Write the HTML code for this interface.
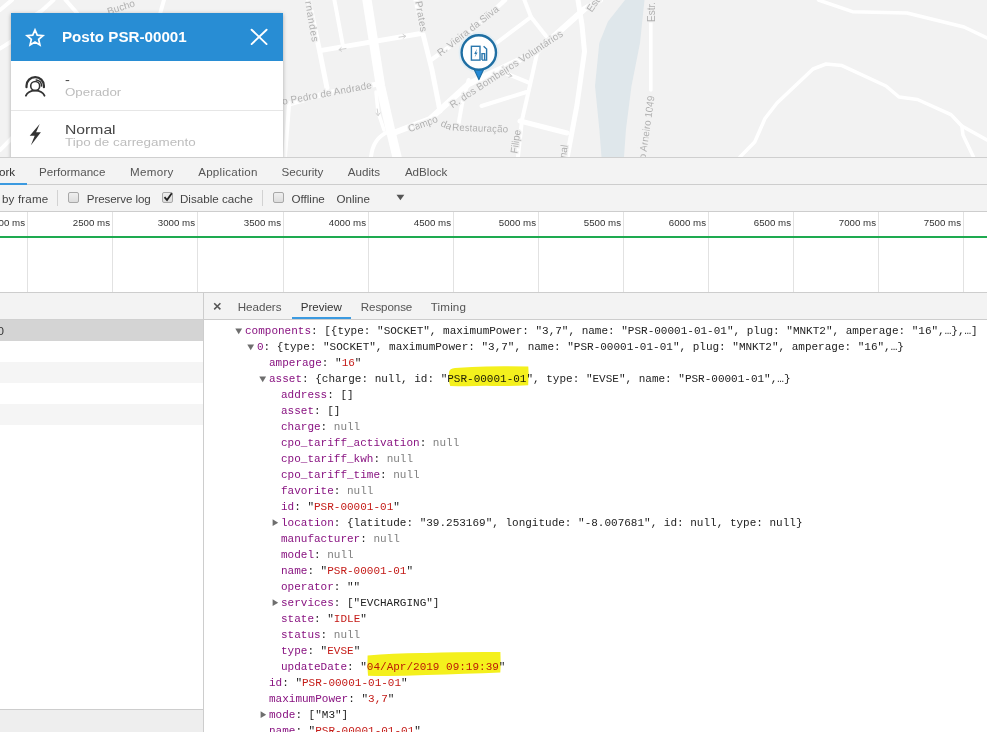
<!DOCTYPE html>
<html>
<head>
<meta charset="utf-8">
<title>DevTools</title>
<style>
*{box-sizing:border-box;margin:0;padding:0}
html,body{width:987px;height:732px;overflow:hidden;background:#fff;font-family:"Liberation Sans",sans-serif;}
body{position:relative}
.abs{position:absolute}
#map{left:0;top:0;width:987px;height:157px;background:#f2f2f2;overflow:hidden}
#card{left:11px;top:13px;width:272px;height:150px;background:#fff;box-shadow:0 1px 4px rgba(0,0,0,.3)}
#card .hd{left:0;top:0;width:272px;height:47.5px;background:#288dd4}
#card .title{left:50.8px;top:15.8px;font-weight:bold;font-size:14px;line-height:16px;color:#fff;white-space:nowrap;transform-origin:0 50%;transform:scaleX(1.083)}
#card .l1{left:53.6px;font-size:13px;line-height:15px;color:#444;white-space:nowrap;transform-origin:0 50%;transform:scaleX(1.12)}
#card .l2{left:53.6px;font-size:11.4px;line-height:13px;color:#bdbdbd;white-space:nowrap;transform-origin:0 50%;transform:scaleX(1.12)}
#card .sep{left:0;top:96.5px;width:272px;height:1px;background:#e6e6e6}
#tabs{left:0;top:157px;width:987px;height:28px;background:#f3f3f3;border-top:1px solid #cfcfcf;border-bottom:1px solid #cdcdcd}
#tabs span{position:absolute;top:7px;font-size:11.6px;color:#555;white-space:nowrap}
#tool{left:0;top:185px;width:987px;height:27px;background:#f3f3f3;border-bottom:1px solid #cdcdcd}
#tool span{position:absolute;top:6.5px;font-size:11.6px;color:#444;white-space:nowrap}
.cb{position:absolute;top:7px;width:11px;height:11px;border:1px solid #a8a8a8;border-radius:2px;background:linear-gradient(#efefef,#dddddd)}
.vsep{position:absolute;top:5px;width:1px;height:16px;background:#d2d2d2}
#tl{left:0;top:212px;width:987px;height:81px;background:#fff;border-bottom:1px solid #cdcdcd}
#tl .g{position:absolute;top:0;width:1px;height:80px;background:#e2e2e2}
#tl .t{position:absolute;top:5px;font-size:9.7px;line-height:12px;color:#333;white-space:nowrap;text-align:right;width:60px}
#tl .green{position:absolute;left:0;top:24px;width:987px;height:2px;background:#1eaa50}
#left{left:0;top:293px;width:204px;height:439px;background:#fff;border-right:1px solid #cdcdcd}
#left .r{position:absolute;left:0;width:203px}
#rt{left:204px;top:293px;width:783px;height:27px;background:#f3f3f3;border-bottom:1px solid #cdcdcd}
#rt span{position:absolute;top:7px;font-size:11.6px;color:#555;white-space:nowrap}
#tree{left:204px;top:321px;width:783px;height:411px;background:#fff;overflow:hidden;font-family:"Liberation Mono",monospace;font-size:11px;color:#222}
#tree .ln{position:absolute;height:16px;line-height:16px;white-space:pre}
.k{color:#881280}.s{color:#c41a16}.n{color:#808080}
.hl{background:transparent}
</style>
</head>
<body>
<div id="map" class="abs">
<svg class="abs" style="left:0;top:0" width="987" height="157" viewBox="0 0 987 157">
<rect width="987" height="157" fill="#f2f2f2"/>
<!-- water -->
<path d="M625 0 L644.5 0 L640 43 L631.5 86 L626 129 L624 157 L601.5 157 L599.3 129 L595 86 L599.3 43 L608 21.5 Z" fill="#dfe7eb"/>
<g fill="none" stroke="#fff" stroke-linecap="round" stroke-linejoin="round">
<!-- upper-left bits -->
<path d="M53.5 0 L42 10.5 L20 25" stroke-width="4"/><path d="M0 10 L12 0" stroke-width="4"/>
<path d="M65.6 0 L77 13" stroke-width="4"/>
<path d="M164 0 L160 14" stroke-width="4"/>
<path d="M0 48.5 L12 41" stroke-width="4"/>
<path d="M0 150 L12 138" stroke-width="4"/>
<!-- main thick vertical -->
<path d="M367 0 L380.5 86 L390 128 L397 157" stroke-width="9.3"/>
<path d="M376 92 L378 112 L384 130" stroke-width="3.5"/>
<path d="M371 157 Q373 138 388 132" stroke-width="4"/>
<!-- rnandes -->
<path d="M308.6 0 L319 48 L327 88" stroke-width="5"/>
<path d="M334.4 0 L343 46" stroke-width="4"/>
<path d="M321.5 50.4 L422.4 33.3" stroke-width="5"/>
<!-- pedro de andrade -->
<path d="M378 84 L327 93 L289 104" stroke-width="5"/>
<path d="M289 106 L285 157" stroke-width="4"/>
<!-- prates -->
<path d="M416 0 L423 34 L432 70 L440 111" stroke-width="5"/>
<!-- vieira da silva -->
<path d="M431 60 L470 32 L505 0" stroke-width="4.5"/>
<!-- bombeiros -->
<path d="M396 132 L430 119 L468.6 84 L537 51.5 L584.5 9 L600 0" stroke-width="6"/>
<path d="M496.5 43 L531 17" stroke-width="4"/>
<path d="M524.4 0 L531 17 L546 36" stroke-width="4"/>
<path d="M578 0 L582 25 L584.5 51.5 L577 105 L567.3 157" stroke-width="5"/>
<path d="M537 53.6 L530 85 L522 120 L518 157" stroke-width="4"/>
<path d="M520 121 L567 133" stroke-width="5"/>
<path d="M481.5 106 L526.6 92" stroke-width="4"/>
<path d="M505 73 L528.7 82.6" stroke-width="4"/>
<path d="M468.6 80 L462 104 L458 127" stroke-width="4"/>
<!-- Estr -->
<path d="M650.8 22 L650.8 90" stroke-width="3.6"/>
<!-- right roads -->
<path d="M818.5 0 L852.4 11.7 L907 13 L964 27 L987 38" stroke-width="3.5"/>
<path d="M740 157 L754.7 142 L765 118.5 L777 103 L813 69 L826 64 L842 65.6 L886 86 L899 97 L917.5 99.5 L951 114.6 L961.8 126 L987 140" stroke-width="3.5"/>
<path d="M961.8 126 L963 135 L973.5 157" stroke-width="3.5"/>
</g>
<g font-family="Liberation Sans, sans-serif" font-size="10" fill="#b0b0b0" stroke="#f2f2f2" stroke-width="2.5" paint-order="stroke" text-anchor="middle">
<text transform="translate(122 10.5) rotate(-18)">Bucho</text>
<text transform="translate(308.5 22) rotate(80)" textLength="41">rnandes</text>
<text transform="translate(418 17) rotate(80)" textLength="31">Prates</text>
<text transform="translate(327.5 96.5) rotate(-10.5)" textLength="91">o Pedro de Andrade</text>
<text transform="translate(470 33.5) rotate(-38)" textLength="75">R. Vieira da Silva</text>
<text transform="translate(508 72) rotate(-33.3)" textLength="133">R. dos Bombeiros Voluntários</text>
<text transform="translate(424 127) rotate(-20)" textLength="31">Campo</text>
<text transform="translate(445 128) rotate(24)">da</text>
<text transform="translate(480 131.5) rotate(2)" textLength="56">Restauração</text>
<text transform="translate(519 142) rotate(-82)">Filipe</text>
<text transform="translate(567 152) rotate(-82)">nal</text>
<text transform="translate(597.5 4.5) rotate(-55)">Estr.</text>
<text transform="translate(654.5 12) rotate(-90)">Estr.</text>
<text transform="translate(650 128) rotate(-82)" textLength="64">o Arneiro 1049</text>
</g>
<g fill="none" stroke="#d0d0d0" stroke-width="1" stroke-linecap="round" stroke-linejoin="round">
<path d="M346 48.5 L339 49.7 M341.2 47.6 L339 49.7 L341.6 51.3"/>
<path d="M399 37.2 L405.5 36.1 M403 34.4 L405.5 36.1 L403.6 38.2"/>
<path d="M377.2 109 L378.2 115.5 M376 113.4 L378.2 115.5 L380 113"/>
<path d="M506.5 73.6 L512 76 M509.4 73.4 L512 76 L508.8 77.2"/>
</g>
<!-- pin -->
<circle cx="478.8" cy="52.5" r="19.4" fill="none" stroke="#dcecf7" stroke-width="1.6" opacity=".7"/>
<path d="M474 69 L483.8 69 L478.9 79.6 Z" fill="#2389d7" stroke="#1f6fa3" stroke-width="1.2" stroke-linejoin="round"/>
<circle cx="478.8" cy="52.5" r="17.2" fill="#fff" stroke="#1f6fa3" stroke-width="2.4"/>
<g fill="none" stroke="#2a77ad" stroke-width="1.4">
<rect x="471.4" y="46.3" width="8.6" height="13.8"/>
<path d="M482 60.1 L482 53 M482 60.1 L486.6 60.1 L486.6 49 L483.6 46.2 M482 53.6 L484.6 53.6 L484.6 60"/>
</g>
<path d="M477 48.8 L474.2 53.9 L475.8 53.9 L474.6 57.6 L477.6 52.4 L476 52.4 Z" fill="#2a77ad"/>
</svg>

</div>
<div id="card" class="abs">
  <div class="hd abs"></div>
  <div id="c_title" class="title abs">Posto PSR-00001</div>
  <div id="c_dash" class="l1 abs" style="top:58.8px">-</div>
  <div id="c_op" class="l2 abs" style="top:73.3px;transform:scaleX(1.17)">Operador</div>
  <div class="sep abs"></div>
  <div id="c_norm" class="l1 abs" style="top:109px;transform:scaleX(1.208)">Normal</div>
  <div id="c_tipo" class="l2 abs" style="top:123px;transform:scaleX(1.178)">Tipo de carregamento</div>
<svg class="abs" style="left:0;top:0" width="272" height="150" viewBox="11 13 272 150">
<!-- star -->
<path d="M35.00 29.80 L37.26 35.09 L42.99 35.60 L38.66 39.39 L39.94 45.00 L35.00 42.05 L30.06 45.00 L31.34 39.39 L27.01 35.60 L32.74 35.09 Z" fill="none" stroke="#fff" stroke-width="1.7" stroke-linejoin="miter"/>
<!-- close -->
<path d="M251.6 29.7 L266.6 44.1 M266.6 29.7 L251.6 44.1" fill="none" stroke="#fff" stroke-width="1.9" stroke-linecap="round"/>
<!-- operator -->
<g fill="none" stroke="#333" stroke-linecap="round">
<path d="M26.5 87.2 L26.5 85.8 A8.7 8.7 0 0 1 43.9 85.8 L43.9 87.2" stroke-width="2.2"/>
<path d="M36.2 79.9 A5.8 5.8 0 0 1 41.6 86" stroke-width="1.5"/>
<circle cx="35.2" cy="86" r="4.5" stroke-width="1.6"/>
<path d="M25.9 95.7 Q28 90.6 35.2 90.6 Q42.4 90.6 44.5 95.7" stroke-width="1.8"/>
</g>
<!-- bolt -->
<path d="M39.7 124 L29.7 135.7 L34.7 135.7 L30.9 145.3 L40.9 132.2 L36.1 132.2 Z" fill="#333"/>
</svg>

</div>
<div id="tabs" class="abs">
<span style="left:-1px;color:#333">ork</span>
<div class="abs" style="left:0;top:25px;width:27px;height:2px;background:#3b9ae0"></div>
<span id="t_perf" style="left:39px">Performance</span>
<span id="t_mem" style="left:130px;letter-spacing:0.3px">Memory</span>
<span id="t_app" style="left:198.2px;letter-spacing:0.25px">Application</span>
<span id="t_sec" style="left:281.5px">Security</span>
<span id="t_aud" style="left:347.8px">Audits</span>
<span id="t_adb" style="left:404.9px">AdBlock</span>
</div>
<div id="tool" class="abs">
<span id="o_by" style="left:2px;letter-spacing:0.15px">by frame</span>
<div class="vsep" style="left:57px"></div>
<div class="cb" style="left:68px"></div>
<span id="o_pl" style="left:86.8px;letter-spacing:-0.1px">Preserve log</span>
<div class="cb" style="left:162px"></div>
<svg class="abs" style="left:162px;top:6px" width="12" height="12" viewBox="0 0 12 12"><path d="M2.5 6.2 L5 9 L9.8 2.2" fill="none" stroke="#222" stroke-width="1.8"/></svg>
<span id="o_dc" style="left:180px">Disable cache</span>
<div class="vsep" style="left:262px"></div>
<div class="cb" style="left:273px"></div>
<span id="o_off" style="left:291.5px">Offline</span>
<span id="o_on" style="left:336.5px">Online</span>
<svg class="abs" style="left:396px;top:9px" width="9" height="7" viewBox="0 0 9 7"><path d="M0.5 0.8 L8.3 0.8 L4.4 6.3 Z" fill="#555"/></svg>
</div>
<div id="tl" class="abs">
<div class="g" style="left:27px"></div><div class="t" style="left:-35px">00 ms</div>
<div class="g" style="left:112px"></div><div class="t" style="left:50px">2500 ms</div>
<div class="g" style="left:197px"></div><div class="t" style="left:135px">3000 ms</div>
<div class="g" style="left:283px"></div><div class="t" style="left:221px">3500 ms</div>
<div class="g" style="left:368px"></div><div class="t" style="left:306px">4000 ms</div>
<div class="g" style="left:453px"></div><div class="t" style="left:391px">4500 ms</div>
<div class="g" style="left:538px"></div><div class="t" style="left:476px">5000 ms</div>
<div class="g" style="left:623px"></div><div class="t" style="left:561px">5500 ms</div>
<div class="g" style="left:708px"></div><div class="t" style="left:646px">6000 ms</div>
<div class="g" style="left:793px"></div><div class="t" style="left:731px">6500 ms</div>
<div class="g" style="left:878px"></div><div class="t" style="left:816px">7000 ms</div>
<div class="g" style="left:963px"></div><div class="t" style="left:901px">7500 ms</div>
<div class="green"></div>
</div>
<div id="left" class="abs">
<div class="r" style="top:0;height:27px;background:#f3f3f3;border-bottom:1px solid #d0d0d0"></div>
<div class="r" style="top:27px;height:21px;background:#d4d4d4"></div>
<div class="abs" style="left:-2.5px;top:31px;font-size:11.6px;color:#333">0</div>
<div class="r" style="top:69px;height:21px;background:#f5f5f5"></div>
<div class="r" style="top:111px;height:21px;background:#f5f5f5"></div>
<div class="r" style="top:416px;height:23px;background:#eeeeee;border-top:1px solid #cdcdcd"></div>
</div>
<div id="rt" class="abs">
<svg class="abs" style="left:9px;top:9px" width="9" height="9" viewBox="0 0 9 9"><path d="M1.2 1.2 L7.4 7.4 M7.4 1.2 L1.2 7.4" stroke="#555" stroke-width="1.5" fill="none"/></svg>
<span id="r_h" style="left:33.7px">Headers</span>
<span id="r_p" style="left:96.7px;color:#333">Preview</span>
<div class="abs" style="left:88px;top:24px;width:59px;height:2px;background:#3b9ae0"></div>
<span id="r_r" style="left:156.8px;letter-spacing:-0.1px">Response</span>
<span id="r_t" style="left:226.8px;letter-spacing:0.15px">Timing</span>
</div>
<div id="tree" class="abs">
<svg class="abs" style="left:31px;top:7px" width="8" height="7" viewBox="0 0 8 7"><path d="M0.3 0.6 L7.1 0.6 L3.7 6.2 Z" fill="#6e6e6e"/></svg><div class="ln" style="left:41px;top:2px"><span class="k">components</span>: [{type: "SOCKET", maximumPower: "3,7", name: "PSR-00001-01-01", plug: "MNKT2", amperage: "16",…},…]</div>
<svg class="abs" style="left:43px;top:23px" width="8" height="7" viewBox="0 0 8 7"><path d="M0.3 0.6 L7.1 0.6 L3.7 6.2 Z" fill="#6e6e6e"/></svg><div class="ln" style="left:53px;top:18px"><span class="k">0</span>: {type: "SOCKET", maximumPower: "3,7", name: "PSR-00001-01-01", plug: "MNKT2", amperage: "16",…}</div>
<div class="ln" style="left:65px;top:34px"><span class="k">amperage</span>: "<span class="s">16</span>"</div>
<svg class="abs" style="left:55px;top:55px" width="8" height="7" viewBox="0 0 8 7"><path d="M0.3 0.6 L7.1 0.6 L3.7 6.2 Z" fill="#6e6e6e"/></svg><div class="ln" style="left:65px;top:50px"><span class="k">asset</span>: {charge: null, id: "<span class="hl">PSR-00001-01</span>", type: "EVSE", name: "PSR-00001-01",…}</div>
<div class="ln" style="left:77px;top:66px"><span class="k">address</span>: []</div>
<div class="ln" style="left:77px;top:82px"><span class="k">asset</span>: []</div>
<div class="ln" style="left:77px;top:98px"><span class="k">charge</span>: <span class="n">null</span></div>
<div class="ln" style="left:77px;top:114px"><span class="k">cpo_tariff_activation</span>: <span class="n">null</span></div>
<div class="ln" style="left:77px;top:130px"><span class="k">cpo_tariff_kwh</span>: <span class="n">null</span></div>
<div class="ln" style="left:77px;top:146px"><span class="k">cpo_tariff_time</span>: <span class="n">null</span></div>
<div class="ln" style="left:77px;top:162px"><span class="k">favorite</span>: <span class="n">null</span></div>
<div class="ln" style="left:77px;top:178px"><span class="k">id</span>: "<span class="s">PSR-00001-01</span>"</div>
<svg class="abs" style="left:68px;top:198px" width="7" height="8" viewBox="0 0 7 8"><path d="M0.6 0.3 L0.6 7.1 L6.2 3.7 Z" fill="#6e6e6e"/></svg><div class="ln" style="left:77px;top:194px"><span class="k">location</span>: {latitude: "39.253169", longitude: "-8.007681", id: null, type: null}</div>
<div class="ln" style="left:77px;top:210px"><span class="k">manufacturer</span>: <span class="n">null</span></div>
<div class="ln" style="left:77px;top:226px"><span class="k">model</span>: <span class="n">null</span></div>
<div class="ln" style="left:77px;top:242px"><span class="k">name</span>: "<span class="s">PSR-00001-01</span>"</div>
<div class="ln" style="left:77px;top:258px"><span class="k">operator</span>: ""</div>
<svg class="abs" style="left:68px;top:278px" width="7" height="8" viewBox="0 0 7 8"><path d="M0.6 0.3 L0.6 7.1 L6.2 3.7 Z" fill="#6e6e6e"/></svg><div class="ln" style="left:77px;top:274px"><span class="k">services</span>: ["EVCHARGING"]</div>
<div class="ln" style="left:77px;top:290px"><span class="k">state</span>: "<span class="s">IDLE</span>"</div>
<div class="ln" style="left:77px;top:306px"><span class="k">status</span>: <span class="n">null</span></div>
<div class="ln" style="left:77px;top:322px"><span class="k">type</span>: "<span class="s">EVSE</span>"</div>
<div class="ln" style="left:77px;top:338px"><span class="k">updateDate</span>: "<span class="hl"><span class="s">04/Apr/2019 09:19:39</span></span>"</div>
<div class="ln" style="left:65px;top:354px"><span class="k">id</span>: "<span class="s">PSR-00001-01-01</span>"</div>
<div class="ln" style="left:65px;top:370px"><span class="k">maximumPower</span>: "<span class="s">3,7</span>"</div>
<svg class="abs" style="left:56px;top:390px" width="7" height="8" viewBox="0 0 7 8"><path d="M0.6 0.3 L0.6 7.1 L6.2 3.7 Z" fill="#6e6e6e"/></svg><div class="ln" style="left:65px;top:386px"><span class="k">mode</span>: ["M3"]</div>
<div class="ln" style="left:65px;top:402px"><span class="k">name</span>: "<span class="s">PSR-00001-01-01</span>"</div>
<svg class="abs" style="left:0;top:0;mix-blend-mode:multiply" width="783" height="411" viewBox="0 0 783 411">
<path d="M245 51 Q245.5 47.5 251 47 L268 46 Q290 44.8 324.3 45.6 L324.6 52 L324.2 64.2 Q300 65.6 282 64.8 Q262 65.6 246.2 64.9 Q244.2 60 245 51 Z" fill="#f4f01d"/>
<path d="M163.6 334.6 Q190 331.8 222 332 Q262 330.6 296.4 331 L296.7 344 L296.3 351.6 Q262 353 222 354 Q190 355.6 164 354.8 Q163 345 163.6 334.6 Z" fill="#f4f01d"/>
</svg>
</div>
</body>
</html>
